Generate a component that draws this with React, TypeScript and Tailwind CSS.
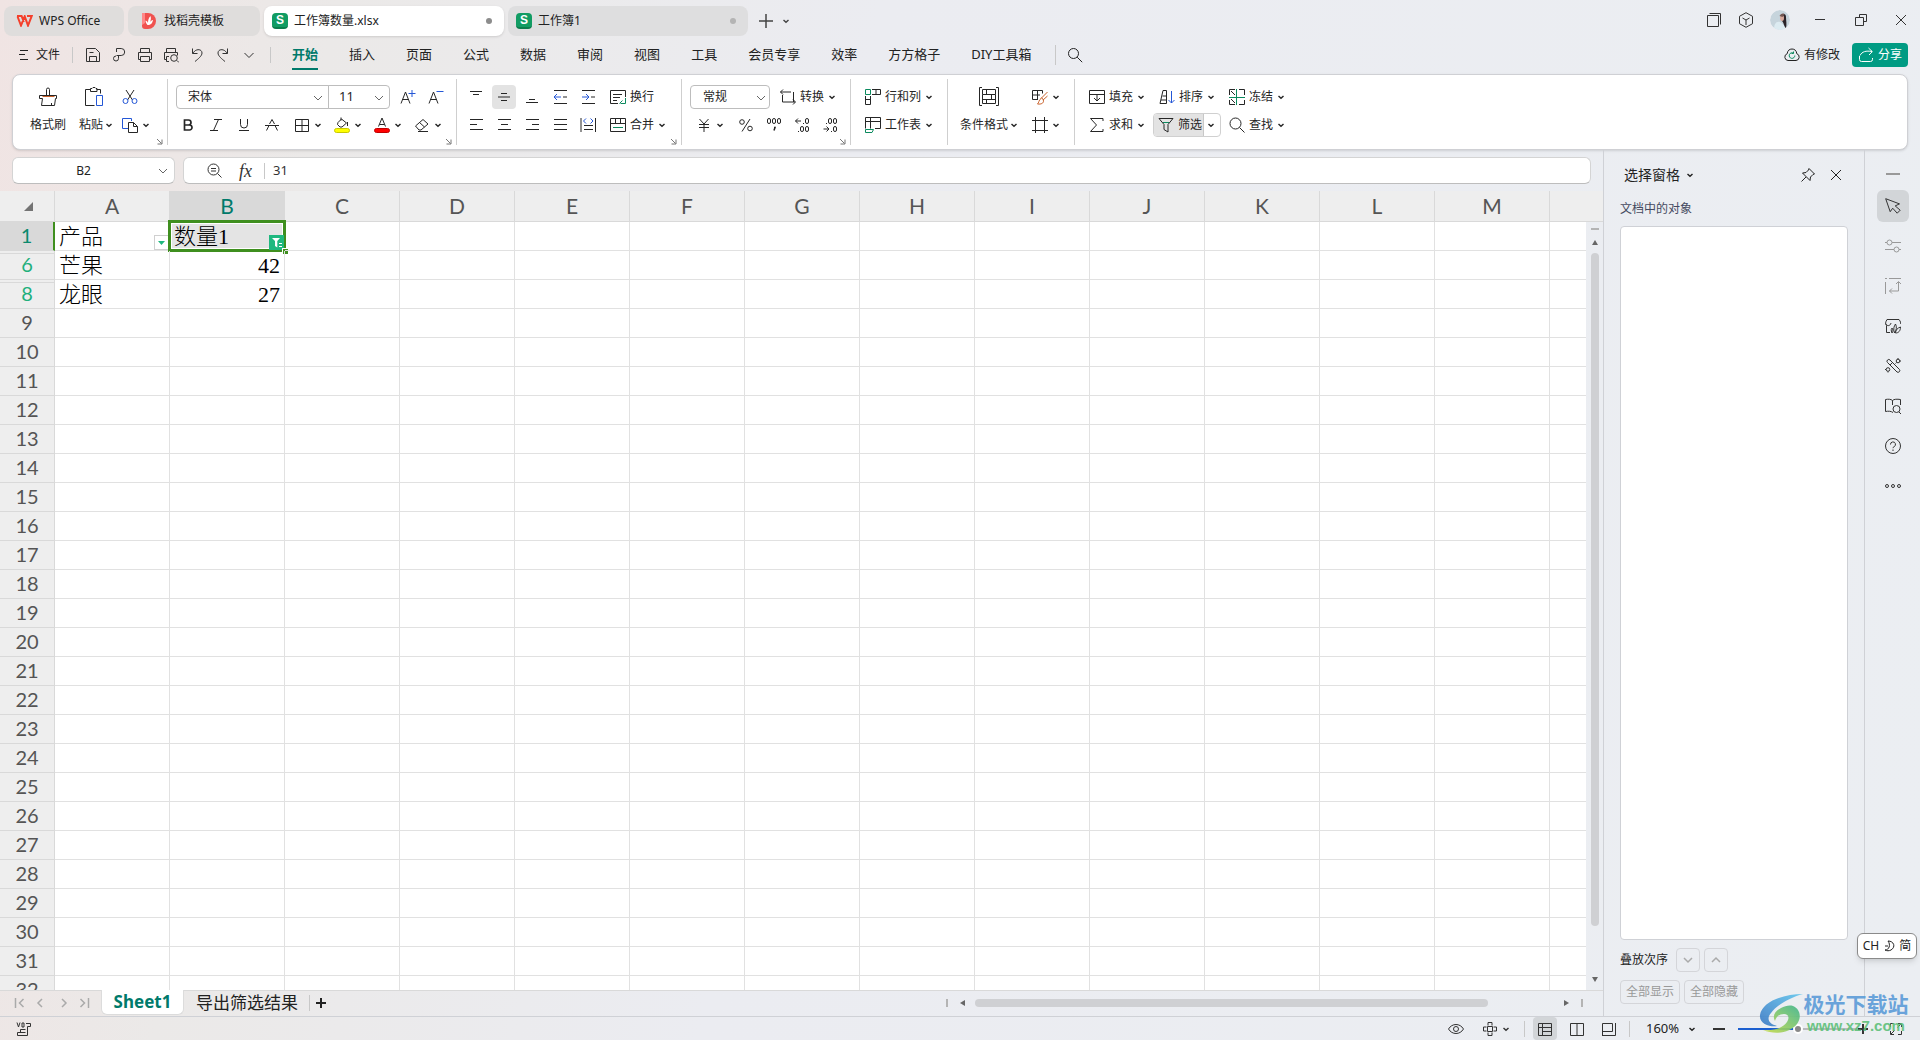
import { useState } from "react";
import type { ReactNode } from "react";

const BLUE = "#2457d6";
const GREEN = "#0b8a5e";
const ORANGE = "#c9622c";

type IconProps = { size?: number; className?: string; children: ReactNode };

function Icon({ size = 16, className = "", children }: IconProps) {
  return (
    <svg
      width={size}
      height={size}
      viewBox={`0 0 ${size} ${size}`}
      fill="none"
      stroke="currentColor"
      strokeWidth="1"
      className={`shrink-0 ${className}`}
      aria-hidden="true"
    >
      {children}
    </svg>
  );
}

// small bold arrow used by the drop-down buttons
function Caret() {
  return (
    <svg width="8" height="8" viewBox="0 0 8 8" fill="none" stroke="currentColor" strokeWidth="1.5" className="shrink-0" aria-hidden="true">
      <path d="M1.5 3 4 5.2 6.5 3" />
    </svg>
  );
}

// thin arrow used inside the boxes
function Chevron({ className = "" }: { className?: string }) {
  return (
    <svg width="10" height="10" viewBox="0 0 10 10" fill="none" stroke="#666" strokeWidth="1" className={`shrink-0 ${className}`} aria-hidden="true">
      <path d="M1 3l4 4 4-4" />
    </svg>
  );
}

// square icon button
function Tool({ label, active, children }: { label: string; active?: boolean; children: ReactNode }) {
  return (
    <button aria-label={label} className="flex h-7 w-7 items-center justify-center">
      <span className={`flex h-6 w-6 items-center justify-center rounded ${active ? "bg-[#e3e3e3]" : ""}`}>{children}</span>
    </button>
  );
}

// icon button with an arrow
function ToolMenu({ label, children }: { label: string; children: ReactNode }) {
  return (
    <button aria-label={label} className="flex h-7 w-10 items-center gap-1 pl-1.5">
      {children}
      <Caret />
    </button>
  );
}

function TextTool({ text, menu = true, children }: { text: string; menu?: boolean; children: ReactNode }) {
  return (
    <button className="flex h-7 items-center gap-1 whitespace-nowrap pl-1 text-xs">
      {children}
      <span>{text}</span>
      {menu && <Caret />}
    </button>
  );
}

function Group({ className, launcher, children }: { className: string; launcher?: boolean; children: ReactNode }) {
  return (
    <div className={`relative flex shrink-0 border-r border-[#cfcfcf] pt-1 ${className}`}>
      {children}
      {launcher && (
        <button aria-label="更多设置" className="absolute right-1 bottom-0 text-[#777]">
          <svg width="7" height="7" viewBox="0 0 7 7" fill="none" stroke="currentColor" aria-hidden="true">
            <path d="M1 1l4.5 4.5M6 1.5V6H1.5" />
          </svg>
        </button>
      )}
    </div>
  );
}

function SheetLogo() {
  return (
    <span className="flex h-4 w-4 shrink-0 items-center justify-center rounded-sm border-b-2 border-[#0b7d4c] bg-[#119c63] font-['Liberation_Sans',sans-serif] text-xs leading-none font-bold text-white">
      S
    </span>
  );
}

function TitleBar() {
  return (
    <header className="flex h-9 items-start">
      <div className="flex gap-1 pt-1.5 pl-1 text-xs">
        <button className="flex h-[30px] w-[120px] items-center gap-1.5 rounded-lg bg-[#dfdddc] pl-3">
          <svg width="17" height="12" viewBox="0 0 17 12" fill="none" stroke="#f4402c" strokeWidth="2" aria-hidden="true">
            <path d="M1 1h4.6l2.2 6M1.5 1.5 5 10.5 8.7 1.3 12 10.5 15.7 1H11" />
          </svg>
          WPS Office
        </button>
        <button className="flex h-[30px] w-[132px] items-center gap-2 rounded-lg bg-[#dfdddc] pl-3.5">
          <svg width="14" height="16" viewBox="0 0 14 16" aria-hidden="true">
            <path d="M0 0h6a8 8 0 0 1 0 16H3a3 3 0 0 1-3-3z" fill="#f0524f" />
            <path d="M0 0v12l3-2V0z" fill="#f88" />
            <path d="M5.5 12C4 10 3.500 9 3.500 7.500 5 8 5.700 9 6 10c0-3 .5-5 2.500-7 .7 2.500.3 4-.4 6 .8-1 1.500-1.600 2.900-2C10.500 10 9 12 5.500 12z" fill="#fff" />
          </svg>
          找稻壳模板
        </button>
        <button className="flex h-[30px] w-[240px] items-center gap-1.5 rounded-lg bg-white pr-3 pl-2 shadow">
          <SheetLogo />
          <span className="flex-1 text-left">工作簿数量.xlsx</span>
          <span className="h-1.5 w-1.5 rounded-full bg-[#8c8c8c]" />
        </button>
        <button className="flex h-[30px] w-[240px] items-center gap-1.5 rounded-lg bg-[#dededf] pr-3 pl-2">
          <SheetLogo />
          <span className="flex-1 text-left">工作簿1</span>
          <span className="h-1.5 w-1.5 rounded-full bg-[#b4b4b4]" />
        </button>
        <button aria-label="新建" className="ml-1 flex h-[30px] w-5 items-center justify-center text-[#444]">
          <Icon size={14}><path d="M7 0v14M0 7h14" strokeWidth="1.5" /></Icon>
        </button>
        <button aria-label="标签列表" className="flex h-[30px] w-3 items-center justify-center text-[#444]"><Caret /></button>
      </div>
      <div className="ml-auto flex h-10 items-center pr-3 text-[#333]">
        <button aria-label="工作区" className="mr-4"><Icon><path d="M1.500 3.500h11v11h-11zM3.500 1.500h11v11" /></Icon></button>
        <button aria-label="应用" className="mr-4">
          <Icon><path d="M8 .7l6.500 3.600v7.400L8 15.300 1.500 11.700V4.300zM4.500 6l3.500 2 3.500-2M8 8v5" /></Icon>
        </button>
        <button aria-label="账号" className="mr-6">
          <svg width="20" height="20" viewBox="0 0 20 20" className="rounded-full" aria-hidden="true">
            <circle cx="10" cy="10" r="10" fill="#c6d4dc" />
            <path d="M4 20c0-6 2-9 6-8l5 4v4z" fill="#dcebf1" />
            <path d="M11 5c3-2 5-1 5 2 0 4 1 7 0 11-2-1-2-5-4-7z" fill="#2a2328" />
            <ellipse cx="12" cy="8" rx="2" ry="3" fill="#d9aa9d" />
            <path d="M9.500 6c1-2 3-3 5-2l-2 3z" fill="#735752" />
          </svg>
        </button>
        <button aria-label="最小化" className="mr-7"><Icon size={12}><path d="M1 5.500h10" /></Icon></button>
        <button aria-label="还原" className="mr-[26px]"><Icon size={14}><path d="M1.500 4.500h8v8h-8zM5.500 4.500v-3h7v7h-3" /></Icon></button>
        <button aria-label="关闭"><Icon size={14}><path d="M2 2l10 10M12 2 2 12" /></Icon></button>
      </div>
    </header>
  );
}

const menus = ["开始", "插入", "页面", "公式", "数据", "审阅", "视图", "工具", "会员专享", "效率", "方方格子", "DIY工具箱"];

function MenuBar() {
  return (
    <nav className="flex h-[38px] items-center pr-3 pl-[18px] text-[#222]">
      <button className="flex items-center gap-2 text-xs">
        <Icon size={10}><path d="M2 .5h8M1 4.500h6M2 9.500h8" /></Icon>
        文件
      </button>
      <span className="mx-3 h-4 w-px bg-[#c8c8c8]" />
      <div className="flex gap-2.5 text-[#333]">
        <button aria-label="保存"><Icon><path d="M1.500 1.500h9l4 4v9h-13zM4.500 14.500v-5h7v5M4.500 5.500h4" /></Icon></button>
        <button aria-label="输出为PDF"><Icon><path d="M5.500 5V1.500h4.700a3.500 3.500 0 0 1 0 7H5.500M7.500 8.500v3a2.500 2.500 0 1 1-2.500-2.500" /></Icon></button>
        <button aria-label="打印"><Icon><path d="M3.500 5.500v-4h9v4M3.500 12.500h-2v-7h13v7h-2M3.500 9.500h9v5h-9z" /></Icon></button>
        <button aria-label="打印预览"><Icon><path d="M3.500 5.500v-4h9v4M3.500 12.500h-2v-7h13v3M6 14.500H3.500v-5H6M14 13.500l2 2" /><circle cx="11" cy="11" r="3.300" /></Icon></button>
        <button aria-label="撤销"><Icon><path d="M3.500 1.500v5h5M4 6.500c2-5 9-5 9-.5 0 3-4 6-7 8.500" /></Icon></button>
        <button aria-label="恢复"><Icon><path d="M12.500 1.500v5h-5M12 6.500c-2-5-9-5-9-.5 0 3 4 6 7 8.500" /></Icon></button>
        <button aria-label="更多"><Icon><path d="M3.500 6 8 10.500 12.500 6" /></Icon></button>
      </div>
      <span className="mr-[21px] ml-[13px] h-4 w-px bg-[#c8c8c8]" />
      <div className="flex h-full gap-[31px] text-[13px]">
        {menus.map((name, i) => (
          <button
            key={name}
            className={`my-1 h-[30px] whitespace-nowrap border-b-2 pt-0.5 ${
              i === 0 ? "border-[#007a6b] font-bold text-[#007a6b]" : "border-transparent"
            }`}
          >
            {name}
          </button>
        ))}
      </div>
      <span className="mr-[11px] ml-6 h-5 w-px bg-[#c8c8c8]" />
      <button aria-label="搜索"><Icon><circle cx="6.500" cy="6.500" r="5" /><path d="M10.200 10.200l5 5" /></Icon></button>
      <div className="ml-auto flex items-center gap-3 text-xs">
        <button className="flex items-center gap-1">
          <Icon>
            <path d="M4 13.500a3.500 3.500 0 0 1-.8-6.800C3.500 3.500 5.500 2 8 2s4.500 1.500 4.800 4.700a3.500 3.500 0 0 1-.8 6.800z" />
            <path d="M10.800 8.500a2.800 2.800 0 1 1-1.500-2.400M9.500 4.500v2H7.600" stroke={GREEN} />
          </Icon>
          有修改
        </button>
        <button className="flex h-6 w-14 items-center gap-1 rounded bg-[#009b83] pl-1.5 text-white">
          <Icon><path d="M1.500 9v3.500a2 2 0 0 0 2 2h9a2 2 0 0 0 2-2V11M2 8.500c2-4 6-5 12-4M10.500 1l3.800 3.600L11 8" /></Icon>
          分享
        </button>
      </div>
    </nav>
  );
}

function Lines({ rows }: { rows: string }) {
  return <Icon><path d={rows} /></Icon>;
}

function Ribbon() {
  return (
    <section className="mx-3 flex h-[76px] rounded-lg border border-[#cfd0d4] bg-white py-1 text-[#262626] shadow">
      <Group className="w-[155px]" launcher>
        <button className="ml-[15px] flex w-10 flex-col items-center gap-1 text-xs">
          <Icon size={20} className="mt-1">
            <path d="M1.500 8.500h17v3h-1l-1 7h-13l1-7h-3zM8.500 8.500v-6a1.500 1.500 0 0 1 3 0v6M13.500 18v-2" />
            <path d="M4.500 9.500h12" stroke={ORANGE} />
          </Icon>
          <span className="flex h-7 items-center">格式刷</span>
        </button>
        <button className="ml-1 flex w-11 flex-col items-center gap-1 text-xs">
          <Icon size={20} className="mt-1">
            <path d="M6.500 2.500h-5v16h9M12.500 2.500h4v4M6.500 4.500v-3h1.500l1-1h2l1 1h1v3z" />
            <path d="M12.500 8.500h6v10h-6z" stroke={BLUE} />
          </Icon>
          <span className="flex h-7 items-center gap-0.5 whitespace-nowrap pl-1">粘贴<Caret /></span>
        </button>
        <div>
          <Tool label="剪切">
            <Icon><path d="M4 1l6.500 10M12 1 5.500 11" /><circle cx="3.500" cy="12" r="2.500" stroke={BLUE} /><circle cx="12.500" cy="12" r="2.500" stroke={BLUE} /></Icon>
          </Tool>
          <ToolMenu label="复制">
            <Icon><path d="M6 11.500H.5v-10h9V4" stroke={BLUE} /><path d="M6.500 5.500h5l4 4v6h-9zM11.500 5.500v4h4" /></Icon>
          </ToolMenu>
        </div>
      </Group>

      <Group className="w-[289px] flex-col" launcher>
        <div className="flex h-7 items-center pl-2">
          <div className="relative h-6">
            <select aria-label="字体" className="block h-6 w-[153px] appearance-none rounded-l border border-[#bdbdbd] pl-[11px] text-xs">
              <option>宋体</option>
            </select>
            <Chevron className="pointer-events-none absolute top-2 right-1.5" />
          </div>
          <div className="relative -ml-px h-6">
            <select aria-label="字号" className="block h-6 w-[62px] appearance-none rounded-r border border-[#bdbdbd] pl-2.5 text-[13px]">
              <option>11</option>
            </select>
            <Chevron className="pointer-events-none absolute top-2 right-1.5" />
          </div>
          <div className="flex pl-1">
            <Tool label="增大字号"><Icon><path d="M1 14.500 5.500 3l4.500 11.500M2.500 10.500h6" /><path d="M8.500 4.500h7M12 1v7" stroke={BLUE} /></Icon></Tool>
            <Tool label="减小字号"><Icon><path d="M1 14.500 5.500 3l4.500 11.500M2.500 10.500h6" /><path d="M8.500 2.500h7" stroke={BLUE} /></Icon></Tool>
          </div>
        </div>
        <div className="flex pl-1.5">
          <Tool label="加粗"><Icon><path d="M4.500 3h4a2.500 2.500 0 0 1 0 5h-4zM4.500 8h5a2.500 2.500 0 0 1 0 5h-5z" strokeWidth="1.700" /></Icon></Tool>
          <Tool label="倾斜"><Icon><path d="M6 2.500h8M2 13.500h8M10.500 2.500l-5 11" /></Icon></Tool>
          <Tool label="下划线"><Icon><path d="M4.500 2v5.500a3.500 3.500 0 0 0 7 0V2M3 13.500h10" /></Icon></Tool>
          <Tool label="删除线"><Icon><path d="M2.500 13.500 5 8.500M13.500 13.500 11 8.500M5.500 7 8 2.500 10.500 7M1 8.500h14" /></Icon></Tool>
          <div className="flex pl-0.5">
            <ToolMenu label="边框"><Icon><path d="M1.500 2.500h13v12h-13zM8 2.500v12M1.500 8.500h13" /></Icon></ToolMenu>
            <ToolMenu label="填充颜色">
              <Icon><path d="M4 5.500 7.500 2l5 4L8 10H6L3.500 7.500zM7 .5v3M13.500 5v4" /><rect x=".5" y="11.500" width="15" height="4" rx="2" fill="#ffff00" stroke="#c9c900" /></Icon>
            </ToolMenu>
            <ToolMenu label="字体颜色">
              <Icon><path d="M4.500 9.500 8 1l3.500 8.500M5.500 7.500h5" /><rect x=".5" y="11.500" width="15" height="4" rx="2" fill="#ff0000" stroke="#c00000" /></Icon>
            </ToolMenu>
            <ToolMenu label="清除"><Icon><path d="M1.500 9 9 2.500l5 4.500-7 6H5zM5.500 5.500l5 4.500M4 14.500h10" /></Icon></ToolMenu>
          </div>
        </div>
      </Group>

      <Group className="w-[225px] flex-col pl-[5px]" launcher>
        <div className="flex">
          <Tool label="顶端对齐"><Lines rows="M2 2.500h12M5 5.500h6" /></Tool>
          <Tool label="垂直居中" active><Lines rows="M5 4.500h6M2 8h12M5 11.500h6" /></Tool>
          <Tool label="底端对齐"><Lines rows="M5 10.500h6M2 13.500h12" /></Tool>
          <Tool label="减少缩进"><Icon><path d="M2 1.500h13M2 14.500h13M11 8h4" /><path d="M9 8H2M5 5 2 8l3 3" stroke={BLUE} /></Icon></Tool>
          <Tool label="增加缩进"><Icon><path d="M2 1.500h13M2 14.500h13M11 8h4" /><path d="M2 8h7M6 5l3 3-3 3" stroke={BLUE} /></Icon></Tool>
          <div className="pl-1">
            <TextTool text="换行" menu={false}>
              <Icon><path d="M8 14.500H.5v-13h15V8M3 5.500h9M3 8.500h7M3 11.500h4" /><path d="M15.500 9v5.500h-5M12.500 11.500l-3 3" stroke={GREEN} /></Icon>
            </TextTool>
          </div>
        </div>
        <div className="flex">
          <Tool label="左对齐"><Lines rows="M2 2.500h13M2 7.500h7M2 12.500h13" /></Tool>
          <Tool label="水平居中"><Lines rows="M2 2.500h13M5 7.500h7M2 12.500h13" /></Tool>
          <Tool label="右对齐"><Lines rows="M2 2.500h13M8 7.500h7M2 12.500h13" /></Tool>
          <Tool label="两端对齐"><Lines rows="M2 2.500h13M2 7.500h13M2 12.500h13" /></Tool>
          <Tool label="分散对齐"><Icon><path d="M1 1v14M15.500 1v14M4 8.500h9M4 12.500h9" /><path d="M6 1.500 3.500 4 6 6.500M10.500 1.500 13 4l-2.500 2.500" stroke={BLUE} /></Icon></Tool>
          <div className="pl-1">
            <TextTool text="合并">
              <Icon><path d="M.5 1.500h15v13H.5zM.5 6.500h15M5.500 1.500v5M10.500 1.500v5" /><path d="M3 10.500h10" stroke={GREEN} /></Icon>
            </TextTool>
          </div>
        </div>
      </Group>

      <Group className="w-[169px] flex-col pl-2" launcher>
        <div className="flex items-center gap-1.5">
          <div className="relative h-6">
            <select aria-label="数字格式" className="block h-6 w-20 appearance-none rounded border border-[#bdbdbd] pl-3 text-xs">
              <option>常规</option>
            </select>
            <Chevron className="pointer-events-none absolute top-2 right-1" />
          </div>
          <TextTool text="转换">
            <Icon><path d="M3 .5.5 3 3 5.500M.5 3H11M13.500 3v10M2.500 6v7H15M13 10.500l2.500 2.500-2.500 2.500" /></Icon>
          </TextTool>
        </div>
        <div className="flex">
          <ToolMenu label="货币格式"><Icon><path d="M3.500 2 8 7l4.500-5M8 7v8M3 7.500h10M3 10.500h10" /></Icon></ToolMenu>
          <div className="flex pl-0.5">
            <Tool label="百分比"><Icon><circle cx="4" cy="5" r="2.300" /><circle cx="12" cy="11.500" r="2.300" /><path d="M12 2 4 14.500" /></Icon></Tool>
            <Tool label="千位分隔"><Icon><rect x="1.500" y="1.500" width="3" height="5" rx="1.500" /><rect x="6.500" y="1.500" width="3" height="5" rx="1.500" /><rect x="11.500" y="1.500" width="3" height="5" rx="1.500" /><path d="M8 10.500h1l-1 3" strokeWidth="1.500" /></Icon></Tool>
            <Tool label="增加小数位"><Icon><path d="M7 4H1.500M4 1.500 1.500 4 4 6.500M9 6.500h1M4 14.500h1" /><rect x="11.500" y="1.500" width="3" height="5" rx="1.500" /><rect x="6.500" y="9.500" width="3" height="5" rx="1.500" /><rect x="11.500" y="9.500" width="3" height="5" rx="1.500" /></Icon></Tool>
            <Tool label="减少小数位"><Icon><path d="M1.500 12H7M4.500 9.500 7 12l-2.500 2.500M9 14.500h1M4 6.500h1" /><rect x="6.500" y="1.500" width="3" height="5" rx="1.500" /><rect x="11.500" y="1.500" width="3" height="5" rx="1.500" /><rect x="11.500" y="9.500" width="3" height="5" rx="1.500" /></Icon></Tool>
          </div>
        </div>
      </Group>

      <Group className="w-[97px] flex-col pl-2.5">
        <TextTool text="行和列">
          <Icon><path d="M7 .5h8.500v5H7M11 .5v5M.5 7v8.500h5V7M.5 10.500h5" /><path d="M.5.5h5v5h-5z" stroke={GREEN} /></Icon>
        </TextTool>
        <TextTool text="工作表">
          <Icon><path d="M.5 11.500V.5h15v11H10M.5 4.500h15M5.500.5v11M5.500 8.500" /><path d="M.5 15.500v-3h8l-1.500 3z" stroke={GREEN} /></Icon>
        </TextTool>
      </Group>

      <Group className="w-[127px] pl-3">
        <button className="flex flex-col items-center gap-1 text-xs">
          <Icon size={20} className="mt-1">
            <path d="M3 .5H.5v18H3M17 .5h2.500v18H17M3.500 2.500h13v5h-13zM3.500 7.500v9h13v-9M3.500 12.500h13M7.500 2.500v5M12.500 7.500v5M7.500 12.500v4" />
          </Icon>
          <span className="flex h-7 items-center gap-0.5 whitespace-nowrap">条件格式<Caret /></span>
        </button>
        <div className="pl-2">
          <ToolMenu label="表格样式"><Icon><path d="M6 10.500H.5v-9h10v3M.5 6H8M5.500 1.500v9" /><path d="M15.500 3 9 9.500M15.500 7 11 11M9.500 9a3 3 0 0 1 2 3c0 2-2 3.500-6 3 1.500-1 1-4 4-6z" stroke={ORANGE} /></Icon></ToolMenu>
          <ToolMenu label="单元格样式"><Icon><path d="M3.500 0v16M12.500 0v16M0 3.500h16M0 13.500h16" /></Icon></ToolMenu>
        </div>
      </Group>

      <div className="grid grid-cols-[70px_70px_70px] content-start gap-x-0 pt-1 pl-2.5">
        <TextTool text="填充"><Icon><path d="M.5 1.500h15v13H.5zM.5 5.500h15M8 6v6M5 9l3 3 3-3" /></Icon></TextTool>
        <TextTool text="排序"><Icon><path d="M1 14.500 4 1.500h3.500v13zM3.500 7h4M2 11h6" /><path d="M12.500 2v12M9.500 11l3 3 3-3" stroke={BLUE} /></Icon></TextTool>
        <TextTool text="冻结"><Icon><path d="M6 .5H.5V6M10 .5h5.500V6M6 15.500H.5V11M10 15.500h5.500V11M2 2l4 4M2 10l4 4" /><path d="M7.500 0v16M0 8.500h16" stroke={GREEN} /></Icon></TextTool>
        <TextTool text="求和"><Icon><path d="M14 4V1.500H1.500l6 6.500-6 6.500H14V12" /></Icon></TextTool>
        <div className="my-0.5 -ml-0.5 flex h-6 w-[68px] overflow-hidden rounded border border-[#d0d0d0] text-xs">
          <button className="flex w-[50px] items-center gap-1 border-r border-[#c8c8c8] bg-[#e3e3e3] pl-1 whitespace-nowrap">
            <Icon><path d="M1 1.500h14l-5 6v7.500l-4-2.500v-5z" /><path d="M5 5.500h6" stroke={GREEN} /></Icon>
            筛选
          </button>
          <button aria-label="筛选选项" className="flex w-3.5 items-center justify-center"><Caret /></button>
        </div>
        <TextTool text="查找"><Icon><circle cx="6.500" cy="6.500" r="5.500" /><path d="M10.500 10.500l5 5" /></Icon></TextTool>
      </div>
    </section>
  );
}

const columns = ["A", "B", "C", "D", "E", "F", "G", "H", "I", "J", "K", "L", "M"];
const data: Record<number, string[]> = {
  1: ["产品", "数量1"],
  6: ["芒果", "42"],
  8: ["龙眼", "27"],
};
// rows 2-5 and 7 are filtered out
const rowNumbers = [1, 6, 8, ...Array.from({ length: 24 }, (_, i) => i + 9)];

function Cell({ row, col }: { row: number; col: number }) {
  const value = data[row]?.[col] ?? "";
  const selected = row === 1 && col === 1;
  const numeric = col === 1 && row !== 1;
  return (
    <td
      className={`relative border-r border-b border-[#e1e1e1] p-0 ${selected ? "bg-[#e4e4e4]" : ""} ${
        numeric ? "pr-1 text-right" : "pl-1"
      }`}
    >
      {value && <div className="h-7 text-[22px] leading-[30px] font-light text-black">{value}</div>}
      {row === 1 && col === 0 && (
        <button aria-label="筛选产品" className="absolute right-0 bottom-0 flex h-[15px] w-[15px] items-center justify-center border border-[#d0d0d0] bg-white">
          <svg width="7" height="4" viewBox="0 0 7 4" aria-hidden="true"><path d="M0 0h7L3.500 4z" fill="#1fb87f" /></svg>
        </button>
      )}
      {selected && (
        <>
          <span className="pointer-events-none absolute -inset-0.5 border-[3px] border-[#3f8f1f] outline outline-1 -outline-offset-4 outline-white" />
          <button aria-label="筛选数量" className="absolute right-0 bottom-0 h-[15px] w-[15px] bg-[#1fb87f]">
            <svg width="15" height="15" viewBox="0 0 15 15" aria-hidden="true">
              <path d="M3 3h8L8.300 6v6.500L6 11V6z" fill="#fff" />
              <path d="M10 8.500h3M10 11.500h3" stroke="#fff" />
            </svg>
          </button>
          <span className="absolute -right-1 -bottom-1 h-1.5 w-1.5 border-t border-l border-white bg-[#3f8f1f]" />
        </>
      )}
    </td>
  );
}

function Grid() {
  return (
    <div className="relative min-h-0 flex-1 basis-0 overflow-hidden bg-white">
      <table className="w-full table-fixed border-separate border-spacing-0 font-['Liberation_Serif','Noto_Sans_CJK_SC',serif]">
        <colgroup>
          <col className="w-[55px]" />
          {columns.map((c) => <col key={c} className="w-[115px]" />)}
          <col />
        </colgroup>
        <thead className="font-['Lato',sans-serif] text-[21px] leading-[30px] text-[#555]">
          <tr className="h-[31px] bg-[#eeeeee]">
            <th className="border-r border-b border-[#d9d9d9] p-0" aria-label="全选">
              <svg width="9" height="9" viewBox="0 0 9 9" className="ml-6" aria-hidden="true"><path d="M9 0v9H0z" fill="#737373" /></svg>
            </th>
            {columns.map((c) => (
              <th
                key={c}
                scope="col"
                className={`border-r border-b border-[#d9d9d9] p-0 font-normal ${c === "B" ? "bg-[#d9d9d9] text-[#007a6b]" : ""}`}
              >
                {c}
              </th>
            ))}
            <th className="border-b border-[#d9d9d9] p-0" aria-label="N" />
          </tr>
        </thead>
        <tbody>
          {rowNumbers.map((n) => (
            <tr key={n} className="h-[29px]">
              <th
                scope="row"
                className={`relative border-b p-0 align-top font-['Lato',sans-serif] text-xl leading-[26px] font-normal ${
                  n === 1
                    ? "border-r-2 border-r-[#3f8f1f] border-b-[#d9d9d9] bg-[#d9d9d9] text-[#0b8a6e]"
                    : n < 9
                      ? "border-r border-[#d9d9d9] bg-[#eeeeee] text-[#1fb07c]"
                      : "border-r border-[#d9d9d9] bg-[#eeeeee] text-[#555]"
                }`}
              >
                {(n === 6 || n === 8) && <span className="absolute inset-x-0 top-0.5 h-px bg-[#d9d9d9]" />}
                {n}
              </th>
              {columns.map((c, i) => <Cell key={c} row={n} col={i} />)}
              <td className="border-b border-[#e1e1e1] p-0" />
            </tr>
          ))}
        </tbody>
      </table>
    </div>
  );
}

function Workbook() {
  const [name, setName] = useState("B2");
  const [formula, setFormula] = useState("31");
  return (
    <main className="flex min-w-0 flex-1 flex-col">
      <div className="flex gap-2 px-3 py-[7px] text-xs">
        <div className="flex h-[27px] w-[163px] items-center rounded-md border border-[#d4d4d4] border-b-[#bdbdbd] bg-white pr-1.5">
          <input aria-label="名称框" value={name} onChange={(e) => setName(e.target.value)} className="w-full min-w-0 pr-1 text-center outline-none" />
          <Chevron />
        </div>
        <div className="flex h-[27px] flex-1 items-center rounded-md border border-[#d4d4d4] border-b-[#bdbdbd] bg-white pl-[23px] text-[#333]">
          <button aria-label="浏览公式结果"><Icon><circle cx="6.500" cy="6.500" r="5.500" /><path d="M10.500 10.500l4 4M4 5.500h5M4 8h5" /></Icon></button>
          <button aria-label="插入函数" className="ml-4 font-['Liberation_Serif',serif] text-lg leading-none italic">fx</button>
          <span className="mr-2 ml-3 h-4 w-px bg-[#c8c8c8]" />
          <input aria-label="编辑栏" value={formula} onChange={(e) => setFormula(e.target.value)} className="min-w-0 flex-1 text-[13px] outline-none" />
        </div>
      </div>

      <div className="flex min-h-0 flex-1">
        <div className="flex min-w-0 flex-1 flex-col"><Grid /></div>
        <div className="flex w-[17px] flex-col items-center">
          <div className="h-[31px] w-full shrink-0 border-b border-[#d9d9d9] bg-[#eeeeee]" />
          <span className="mt-1.5 h-0.5 w-2 shrink-0 bg-[#b4b4b4]" />
          <svg width="6" height="5" viewBox="0 0 6 5" className="mt-2.5 shrink-0" aria-hidden="true"><path d="M3 0l3 5H0z" fill="#666" /></svg>
          <div className="my-2 min-h-0 w-2 flex-1"><div className="h-[94%] rounded-full bg-[#cfd0d3]" /></div>
          <svg width="6" height="5" viewBox="0 0 6 5" className="mb-2 shrink-0" aria-hidden="true"><path d="M3 5l3-5H0z" fill="#666" /></svg>
        </div>
      </div>

      <div className="flex h-[26px] border-t border-[#d9d9d9]">
        <div className="flex flex-1 items-center pb-0.5 pl-3">
          <div className="flex gap-1 text-[#aaa]">
            <button aria-label="第一张"><Icon><path d="M3.500 3v10M11.500 4l-4 4 4 4" strokeWidth="1.500" /></Icon></button>
            <button aria-label="上一张"><Icon><path d="M10 4 6 8l4 4" strokeWidth="1.500" /></Icon></button>
            <button aria-label="下一张" className="ml-1"><Icon><path d="M6 4l4 4-4 4" strokeWidth="1.500" /></Icon></button>
            <button aria-label="最后一张"><Icon><path d="M12.500 3v10M4.500 4l4 4-4 4" strokeWidth="1.500" /></Icon></button>
          </div>
          <button className="-mt-px ml-[9px] h-[25px] w-[83px] self-start rounded-b-md border border-t-0 border-[#dcdcdc] bg-white text-[17px] leading-6 font-bold text-[#007a6b]">
            Sheet1
          </button>
          <button className="mr-[11px] ml-3 text-[17px] leading-6 whitespace-nowrap text-[#222]">导出筛选结果</button>
          <span className="h-4 w-px bg-[#c8c8c8]" />
          <button aria-label="新建工作表" className="ml-1.5"><Icon size={10}><path d="M5 0v10M0 5h10" strokeWidth="2" /></Icon></button>
        </div>
        <div className="flex w-[41%] items-center pb-0.5">
          <span className="h-2 w-0.5 bg-[#b4b4b4]" />
          <svg width="5" height="6" viewBox="0 0 5 6" className="ml-3" aria-hidden="true"><path d="M0 3l5-3v6z" fill="#666" /></svg>
          <div className="mr-1.5 ml-2.5 h-2 flex-1"><div className="h-2 w-[88%] rounded-full bg-[#cfd0d3]" /></div>
          <svg width="5" height="6" viewBox="0 0 5 6" aria-hidden="true"><path d="M5 3 0 0v6z" fill="#666" /></svg>
          <span className="mr-5 ml-3 h-2 w-0.5 bg-[#b4b4b4]" />
        </div>
      </div>
    </main>
  );
}

function SelectionPane() {
  return (
    <aside className="flex w-[261px] shrink-0 flex-col border-l border-[#cfd1d6] px-4 pt-[11px] pb-3">
      <div className="flex h-7 items-center pl-1 text-[#222]">
        <button className="flex items-center gap-1.5 text-sm">选择窗格<Caret /></button>
        <button aria-label="固定" className="ml-auto">
          <Icon><path d="M9 1.500l5.500 5.500-1.500.5-2.500 2.500-.5 3.500-7.500-7.500 3.500-.5L8.500 3zM6 10l-4.500 4.500" /></Icon>
        </button>
        <button aria-label="关闭窗格" className="mr-1 ml-3"><Icon><path d="M3 3l10 10M13 3 3 13" /></Icon></button>
      </div>
      <h2 className="mt-2 h-6 text-xs leading-6 text-[#454a60]">文档中的对象</h2>
      <div className="mt-[5px] flex-1 rounded border border-[#cfd1d6] bg-white" />
      <div className="mt-2 flex items-center text-xs text-[#222]">
        <span className="w-14">叠放次序</span>
        <button aria-label="下移" className="flex h-6 w-6 items-center justify-center rounded border border-[#d4d5d9]">
          <Icon size={12}><path d="M2 4l4 4 4-4" stroke="#aaa" strokeWidth="1.500" /></Icon>
        </button>
        <button aria-label="上移" className="ml-1 flex h-6 w-6 items-center justify-center rounded border border-[#d4d5d9]">
          <Icon size={12}><path d="M2 8l4-4 4 4" stroke="#aaa" strokeWidth="1.500" /></Icon>
        </button>
      </div>
      <div className="mt-2 flex gap-1 text-xs text-[#999]">
        <button className="h-6 w-[60px] rounded border border-[#d4d5d9]">全部显示</button>
        <button className="h-6 w-[60px] rounded border border-[#d4d5d9]">全部隐藏</button>
      </div>
    </aside>
  );
}

function Rail() {
  return (
    <div className="flex w-14 shrink-0 flex-col items-center gap-2 border-l border-[#cfd1d6] pt-[3px] text-[#333]">
      <button aria-label="收起" className="mt-3 flex h-[17px] w-8 items-center justify-center"><span className="h-0.5 w-3.5 bg-[#999]" /></button>
      <button aria-label="选择" className="flex h-8 w-8 items-center justify-center rounded-md bg-[#d2d5d8]">
        <Icon><path d="M.7.7l4.500 13 2.500-3.500 4.500 5 3-3-5-4.300 4.300-2z" /></Icon>
      </button>
      <button aria-label="属性" className="flex h-8 w-8 items-center justify-center text-[#999]">
        <Icon><path d="M0 4.500h2M7 4.500h9M0 11.500h9M14 11.500h2" /><circle cx="4.500" cy="4.500" r="2.500" /><circle cx="11.500" cy="11.500" r="2.500" /></Icon>
      </button>
      <button aria-label="转置" className="flex h-8 w-8 items-center justify-center text-[#999]">
        <Icon><path d="M4 .5h12M.5 4v12M0 .5h2M13.500 4v9h-9M11 6l2.500-2.500L16 6M7 10.500 4.500 13 7 15.500" /></Icon>
      </button>
      <button aria-label="模板" className="flex h-8 w-8 items-center justify-center">
        <Icon><path d="M5 14.500H1.500V7.500C0 6 .5 4 2 1.500h12c1.500 2 2 3.500 1.500 4.500M1 6c1 2.500 4.500 2 5-1" /><path d="M7 15c-1.500-3-.5-4.500 0-5 1 1 1.500 3 0 5zM9.500 15C8 11 9 8 10.500 6c1.500 3 1 6-1 9zM10.500 15c0-3 2-5 5-6 0 4-2 6-5 6z" /></Icon>
      </button>
      <button aria-label="工具" className="flex h-8 w-8 items-center justify-center">
        <Icon><path d="M2.500 4.500a1.600 1.600 0 0 1 2.500-2.500l9.500 9.500a1.800 1.800 0 0 1-2.500 2.500zM5 7l2.500-2.500" /><circle cx="13" cy="3" r="1.800" /><circle cx="3" cy="11.500" r="1.800" /><path d="M10.500 5.500l1-1M13 0v1M16 3h-1M0 11.500h1M3 14.500v-1" /></Icon>
      </button>
      <button aria-label="查阅" className="flex h-8 w-8 items-center justify-center">
        <Icon><path d="M8 14.500c-2-1.500-5-1.500-7.500-1V1.500C3 1 6 1 7.500 2.500 9 1 12 1 15.500 1.500V7M7.500 2.500V7M14 14l2 2" /><circle cx="11.500" cy="11" r="3.500" /></Icon>
      </button>
      <button aria-label="帮助" className="flex h-8 w-8 items-center justify-center">
        <Icon><circle cx="8" cy="8" r="7.500" /><path d="M5.500 6.500a2.500 2.500 0 1 1 3.500 2.200c-.7.400-1 .7-1 1.500M8 11.500V13" /></Icon>
      </button>
      <button aria-label="更多" className="flex h-8 w-8 items-center justify-center">
        <Icon><circle cx="2" cy="8" r="1.500" /><circle cx="8" cy="8" r="1.500" /><circle cx="14" cy="8" r="1.500" /></Icon>
      </button>
    </div>
  );
}

function StatusBar() {
  const [zoom, setZoom] = useState(50);
  return (
    <footer className="flex h-6 shrink-0 items-center border-t border-[#cfd1d6] px-4 text-[#333]">
      <button aria-label="宏编辑器">
        <Icon><path d="M1 1.500 2.500 6 4 1.500M6 2v4h2V2zM10 2.500h4.500v3h-3v9h-10v-3h8M4.500 11.500v-3h5" /></Icon>
      </button>
      <div className="ml-auto flex h-full items-center">
        <button aria-label="护眼模式"><Icon><path d="M.5 8C4 2 12 2 15.500 8 12 14 4 14 .5 8z" /><circle cx="8" cy="8" r="2.500" /></Icon></button>
        <button aria-label="阅读模式" className="ml-[18px] flex items-center gap-1">
          <Icon><path d="M6 4.500v-3h4v3M6 11.500v3h4v-3M4.500 6h-3v4h3M11.500 6h3v4h-3M5.500 5.500h5v5h-5z" /></Icon>
          <Caret />
        </button>
        <span className="mr-2 ml-3.5 h-4 w-px bg-[#c8c8c8]" />
        <button aria-label="普通视图" className="flex h-full w-6 items-center justify-center rounded bg-[#d2d5d8]"><Icon><path d="M1.500 2.500h13v12h-13zM1.500 6.500h13M5.500 2.500v12M5.500 10.500h9" /></Icon></button>
        <button aria-label="分页预览" className="ml-3"><Icon><path d="M1.500 2.500h13v12h-13zM8 2.500v12" /></Icon></button>
        <button aria-label="页面布局" className="ml-4"><Icon><path d="M1.500 2.500h10v8h-10zM14.500 2v12.500H1M1.500 10v4.500" /></Icon></button>
        <span className="mr-4 ml-3 h-4 w-px bg-[#c8c8c8]" />
        <button className="flex items-center text-[13px] text-[#222]"><span className="w-[42px] text-left">160%</span><Caret /></button>
        <button aria-label="缩小" className="ml-4"><Icon size={14}><path d="M1 7h12" strokeWidth="2" /></Icon></button>
        <input
          type="range"
          aria-label="显示比例"
          value={zoom}
          onChange={(e) => setZoom(Number(e.target.value))}
          className="ml-3 h-0.5 w-[120px] appearance-none bg-[linear-gradient(90deg,#1c5fd0_50%,#b8babd_50%)] [&::-webkit-slider-thumb]:h-2.5 [&::-webkit-slider-thumb]:w-2.5 [&::-webkit-slider-thumb]:appearance-none [&::-webkit-slider-thumb]:rounded-full [&::-webkit-slider-thumb]:border-2 [&::-webkit-slider-thumb]:border-white [&::-webkit-slider-thumb]:bg-[#888]"
        />
        <button aria-label="放大"><Icon size={10}><path d="M5 0v10M0 5h10" strokeWidth="2" /></Icon></button>
        <button aria-label="全屏" className="ml-5"><Icon><path d="M2.500 6V2.500H6M10 2.500h3.500V6M13.500 10v3.500H10M6 13.500H2.500V10M9.500 6.500l3.500-3.500M6.500 9.500 3 13" /></Icon></button>
      </div>
    </footer>
  );
}

function Watermark() {
  return (
    <div className="pointer-events-none absolute right-[11px] bottom-1 flex items-center font-bold opacity-90">
      <svg width="44" height="42" viewBox="0 0 44 42" aria-hidden="true">
        <defs>
          <linearGradient id="wm-top" x1="0" y1="1" x2="1" y2="0"><stop offset="0" stopColor="#3a78c4" /><stop offset="1" stopColor="#63c7ee" /></linearGradient>
          <linearGradient id="wm-low" x1="0" y1="1" x2="1" y2="0"><stop offset="0" stopColor="#c9dc4a" /><stop offset="1" stopColor="#3fb58a" /></linearGradient>
        </defs>
        <path d="M44 1C24 1 3 9 1 22c-1 9 10 12 17 11C10 31 7 26 12 20 18 12 30 5 44 1z" fill="url(#wm-top)" />
        <path d="M34 13c7 3 9 11 4 18C31 40 16 42 4 37c11 1 20-2 24-8 3-5 1-8-3-8-5 0-8 3-9 7-3-5 0-10 6-13 4-2 8-3 12-2z" fill="url(#wm-low)" />
      </svg>
      <div className="flex w-[106px] flex-col items-center whitespace-nowrap">
        <span className="text-[21px] leading-6 text-[#5b9bd8]">极光下载站</span>
        <span className="font-['Liberation_Sans',sans-serif] text-[15px] leading-5 text-[#5fc07a]">www.xz7.com</span>
      </div>
    </div>
  );
}

export default function App() {
  return (
    <div
      lang="zh-CN"
      className="relative flex h-screen w-full flex-col overflow-hidden bg-[linear-gradient(100deg,#f0e4e3_0%,#ebe9e8_16%,#ebecf1_42%,#ebeef2_100%)] font-['Noto_Sans','Noto_Sans_CJK_SC',sans-serif] text-[#222]"
    >
      <TitleBar />
      <MenuBar />
      <Ribbon />
      <div className="flex min-h-0 flex-1">
        <Workbook />
        <SelectionPane />
        <Rail />
      </div>
      <StatusBar />
      <div className="absolute right-[3px] bottom-[81px] flex h-[26px] w-[60px] items-center justify-center gap-1 rounded-md border border-[#8a8a8a] bg-white text-xs shadow-md">
        CH
        <Icon size={12}><path d="M5 1c6 0 8 6 3 9-2 1-4 1-6 0 4 0 6-5 3-9zM2 6h3" /></Icon>
        简
      </div>
      <Watermark />
    </div>
  );
}
